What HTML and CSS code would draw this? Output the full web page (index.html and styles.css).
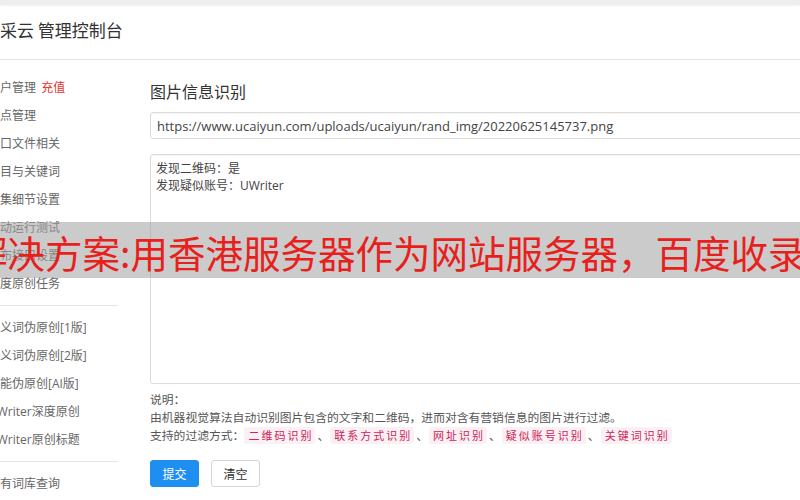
FILE: index.html
```html
<!DOCTYPE html>
<html lang="zh-CN">
<head>
  <meta charset="UTF-8">
  <title>优采云 管理控制台</title>
  <link rel="stylesheet" href="styles.css">
</head>
<body>
<div class="topbar"></div>
<div class="header">
  <span class="brand">优采云 管理控制台</span>
</div>

<div class="layout">
  <ul class="sidebar">
    <li>账户管理 <span class="hot">充值</span></li>
    <li>站点管理</li>
    <li>入口文件相关</li>
    <li>栏目与关键词</li>
    <li>采集细节设置</li>
    <li>自动运行测试</li>
    <li>发布接口设置</li>
    <li>百度原创任务</li>
    <li class="sep"></li>
    <li>同义词伪原创[1版]</li>
    <li>同义词伪原创[2版]</li>
    <li>智能伪原创[AI版]</li>
    <li>UWriter深度原创</li>
    <li>UWriter原创标题</li>
    <li class="sep"></li>
    <li>专有词库查询</li>
  </ul>

  <div class="main">
    <h2 class="title">图片信息识别</h2>
    <input class="url-input" type="text" value="https://www.ucaiyun.com/uploads/ucaiyun/rand_img/20220625145737.png">
    <textarea class="result">发现二维码：是
发现疑似账号：UWriter</textarea>
    <div class="note">
      <p>说明：</p>
      <p>由机器视觉算法自动识别图片包含的文字和二维码，进而对含有营销信息的图片进行过滤。</p>
      <p>支持的过滤方式：<code>二维码识别</code><span class="dot">、</span><code>联系方式识别</code><span class="dot">、</span><code>网址识别</code><span class="dot">、</span><code>疑似账号识别</code><span class="dot">、</span><code>关键词识别</code></p>
    </div>
    <div class="actions">
      <button class="btn btn-primary">提交</button>
      <button class="btn">清空</button>
    </div>
  </div>
</div>

<div class="banner">解决方案:用香港服务器作为网站服务器，百度收录</div>
</body>
</html>
```

FILE: styles.css
```css
* {
  box-sizing: border-box;
}

body {
  margin: 0;
  width: 800px;
  height: 500px;
  overflow: hidden;
  position: relative;
  background: #fff;
  font-family: "Open Sans", "Noto Sans CJK SC", sans-serif;
  color: #555;
}

.topbar {
  height: 5px;
  background: #eeeeee;
  box-shadow: 0 1px 2px rgba(0,0,0,.06);
}

.header {
  height: 55px;
  border-bottom: 1px solid #e2e2e2;
  display: flex;
  align-items: center;
  padding-bottom: 6px;
  margin-left: -17px;
}
.brand {
  font-size: 17px;
  color: #333;
  font-family: "Noto Sans CJK SC", sans-serif;
}

.layout {
  display: flex;
}

.sidebar {
  list-style: none;
  margin: 0 0 0 -12px;
  padding: 14px 0 0;
  width: 130px;
  flex-shrink: 0;
}
.sidebar li {
  height: 28px;
  line-height: 28px;
  font-size: 12px;
  color: #666;
  white-space: nowrap;
}
.sidebar li.sep {
  height: 1px;
  margin: 7px 0 8px;
  background: #e5e5e5;
}
.hot {
  color: #e8332c;
  margin-left: 2px;
}

.main {
  margin-left: 32px;
  width: 700px;
  flex-shrink: 0;
  padding-top: 19px;
}

.title {
  margin: 0 0 9px;
  font-size: 16px;
  font-weight: normal;
  color: #333;
  line-height: 24px;
  font-family: "Noto Sans CJK SC", sans-serif;
}

.url-input {
  display: block;
  width: 100%;
  height: 27px;
  border: 1px solid #dcdcdc;
  border-radius: 3px;
  padding: 0 6px;
  font-family: "Open Sans", "Noto Sans CJK SC", sans-serif;
  font-size: 13px;
  color: #444;
  box-shadow: inset 0 1px 1px rgba(0,0,0,.05);
}

.result {
  display: block;
  width: 100%;
  height: 230px;
  margin-top: 15px;
  border: 1px solid #dcdcdc;
  border-radius: 3px;
  padding: 5px 5px;
  resize: none;
  font-family: "Open Sans", "Noto Sans CJK SC", sans-serif;
  font-size: 12px;
  line-height: 17px;
  color: #444;
  box-shadow: inset 0 1px 1px rgba(0,0,0,.05);
}

.note {
  margin-top: 6px;
  font-size: 11.8px;
  line-height: 18px;
  color: #555;
}
.note p {
  margin: 0;
}
.note code {
  font-family: "Open Sans", "Noto Sans CJK SC", sans-serif;
  font-size: 11px;
  letter-spacing: 2px;
  color: #d0245a;
  background: #fbf0f3;
  padding: 1px 2px 1px 4px;
  border-radius: 3px;
}
.dot {
  margin: 0 1px 0 2px;
}

.actions {
  margin-top: 15px;
  display: flex;
  gap: 12px;
}
.btn {
  width: 49px;
  height: 27px;
  border: 1px solid #d6d6d6;
  border-radius: 3px;
  background: #fff;
  font-family: "Noto Sans CJK SC", sans-serif;
  font-size: 12px;
  color: #333;
  padding: 0;
}
.btn-primary {
  background: #1e8ff0;
  border-color: #1e8ff0;
  color: #fff;
}

.banner {
  position: absolute;
  left: -30px;
  top: 222px;
  width: 860px;
  height: 56px;
  background: rgba(160,160,160,.55);
  color: #e8201c;
  font-family: "Noto Sans CJK SC", sans-serif;
  font-size: 37.5px;
  line-height: 60px;
  white-space: nowrap;
  overflow: hidden;
}
```
